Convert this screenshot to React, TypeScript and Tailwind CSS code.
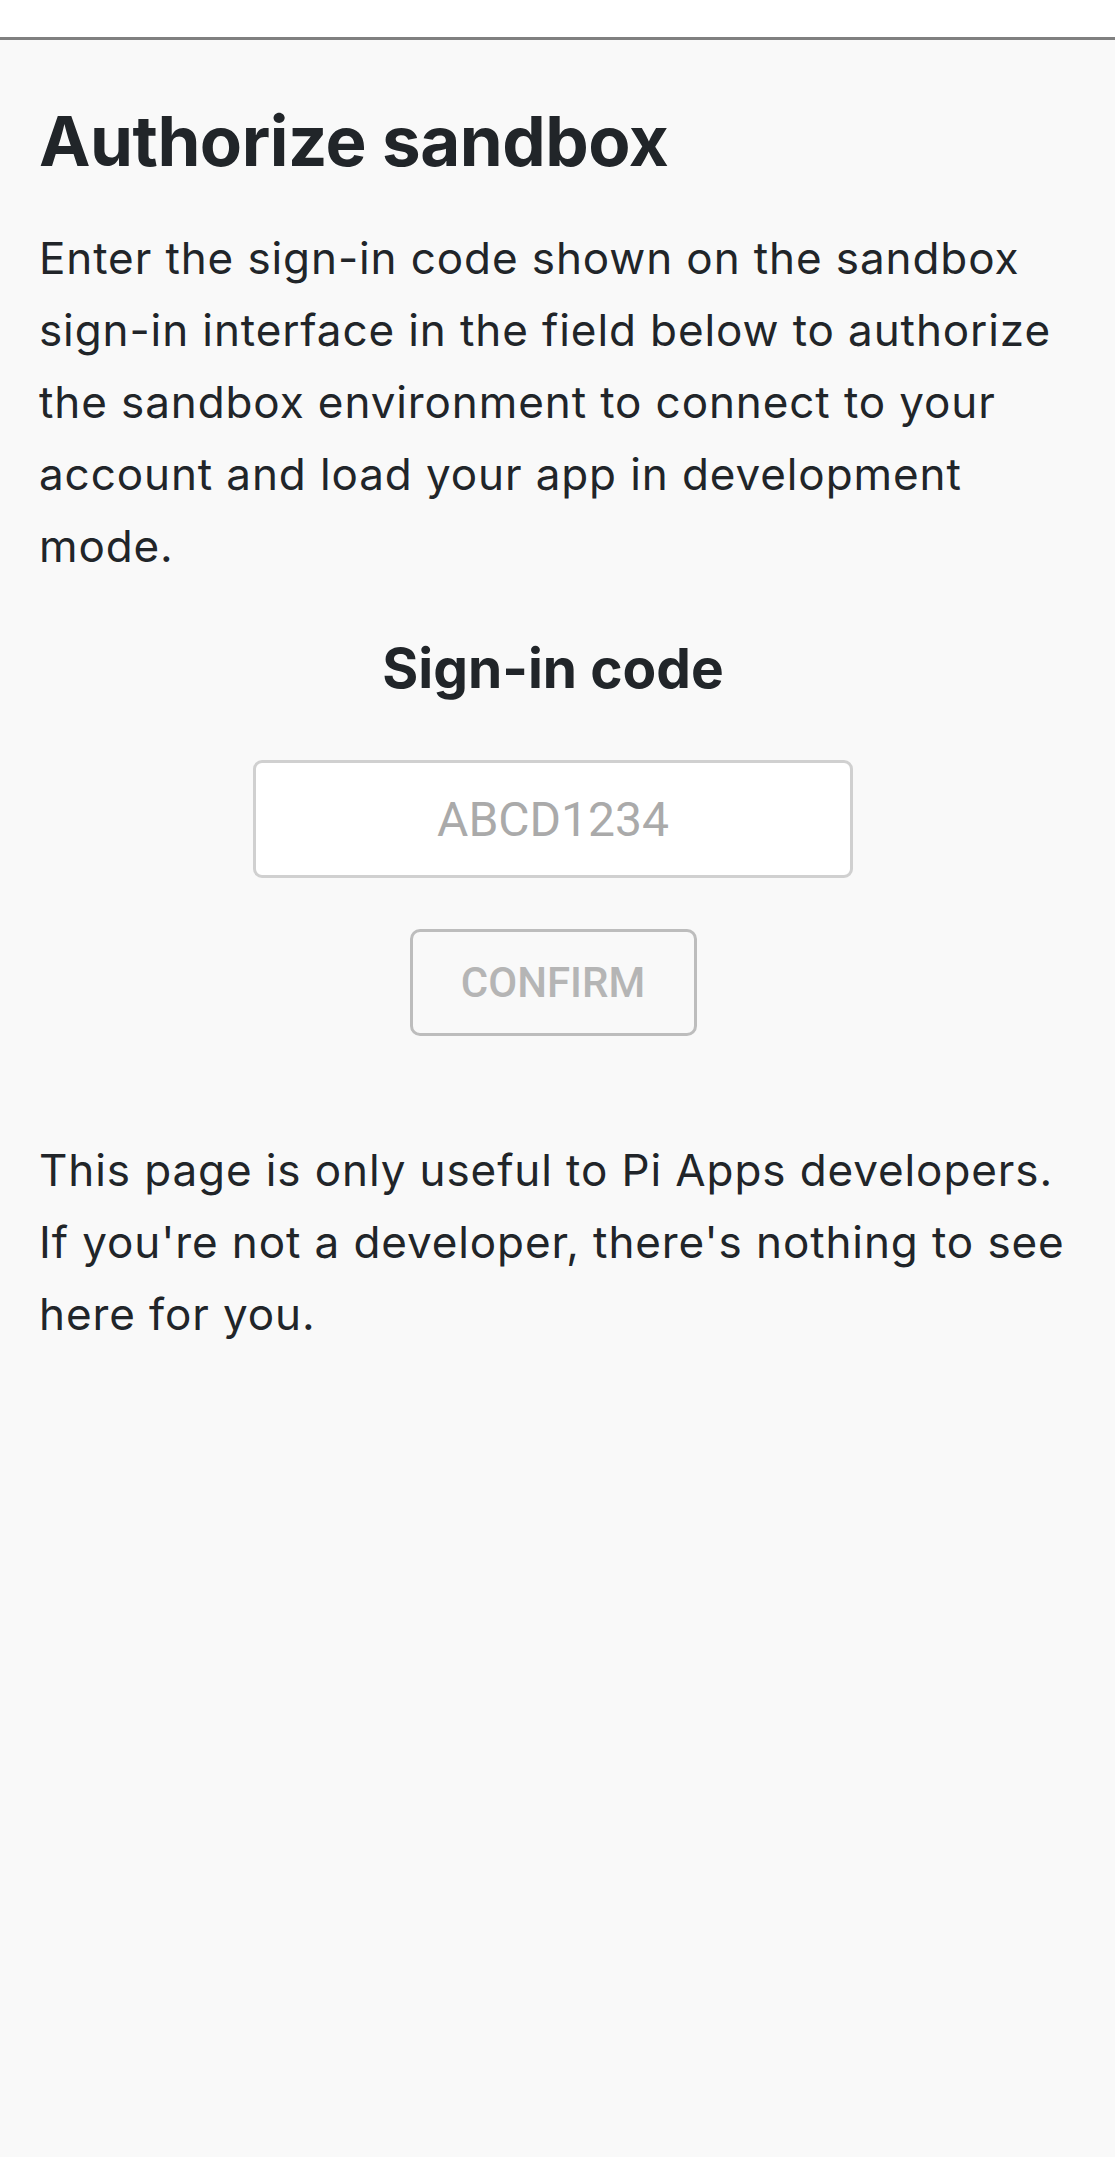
export default function App() {
  return (
    <div className="min-h-[2157px] bg-[#f9f9f9] font-['Inter','Liberation_Sans',sans-serif] text-[#212529]">
      <div className="h-[40px] bg-white border-b-[3px] border-[#808080]" />

      <main className="pl-[39px] pr-[48px] pt-[58px]">
        <h1 className="text-[69px] leading-[86px] font-bold tracking-[-0.5px]">Authorize sandbox</h1>

        <p className="mt-[38px] text-[44px] leading-[72px] tracking-[0.9px]">
          Enter the sign-in code shown on the sandbox sign-in interface in the field below to
          authorize the sandbox environment to connect to your account and load your app in
          development mode.
        </p>

        <div className="flex flex-col items-center">
          <h2 className="mt-[52px] text-[55px] leading-[68px] font-bold">Sign-in code</h2>

          <input
            type="text"
            placeholder="ABCD1234"
            className="mt-[58px] w-[600px] h-[118px] bg-white border-[3px] border-[#d0d0d0] rounded-[9px] text-center font-['Roboto',sans-serif] text-[48px] text-[#212529] placeholder:text-[#aaaaaa] outline-none"
          />

          <button
            disabled
            className="mt-[51px] w-[287px] h-[107px] border-[3px] border-[#bdbdbd] rounded-[10px] font-['Roboto',sans-serif] text-[42px] font-medium text-[#b5b5b5]"
          >
            CONFIRM
          </button>
        </div>

        <p className="mt-[98px] text-[44px] leading-[72px] tracking-[0.9px]">
          This page is only useful to Pi Apps developers. If you're not a developer, there's
          nothing to see here for you.
        </p>
      </main>
    </div>
  );
}
